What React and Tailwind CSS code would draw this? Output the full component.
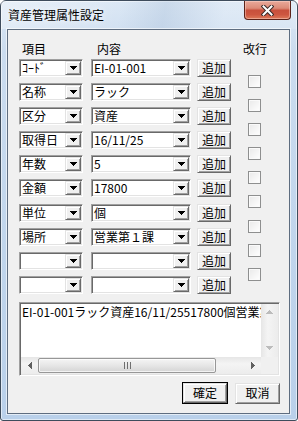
const rows = [
  ['ｺｰﾄﾞ', 'EI-01-001'],
  ['名称', 'ラック'],
  ['区分', '資産'],
  ['取得日', '16/11/25'],
  ['年数', '5'],
  ['金額', '17800'],
  ['単位', '個'],
  ['場所', '営業第１課'],
  ['', ''],
  ['', ''],
];

const sunken =
  'border border-t-[#a0a0a0] border-l-[#a0a0a0] border-r-white border-b-white shadow-[inset_1px_1px_0_#696969,inset_-1px_-1px_0_#e3e3e3]';
const raised =
  'border border-t-[#e3e3e3] border-l-[#e3e3e3] border-r-[#696969] border-b-[#696969] bg-[#f0f0f0] shadow-[inset_1px_1px_0_#fff,inset_-1px_-1px_0_#a0a0a0]';

const DownTri = ({ color = '#000' }) => (
  <svg width="7" height="4" viewBox="0 0 7 4" shapeRendering="crispEdges">
    <path d="M0 0h7v1h-1v1h-1v1h-1v1h-1v-1h-1v-1h-1v-1h-1z" fill={color} />
  </svg>
);

const Combo = ({ width, text }) => (
  <div className={`flex h-[18px] ${width} bg-white p-[1px] ${sunken}`}>
    <span className="flex-1 whitespace-nowrap pl-[1px] text-[12px] leading-[14px]">{text}</span>
    <span className={`flex w-[16px] items-center justify-center ${raised}`}>
      <DownTri />
    </span>
  </div>
);

const Checkbox = () => (
  <div className="h-[13px] w-[13px] border border-[#8e8f8f] bg-[linear-gradient(135deg,#e9e9e9,#ffffff)] shadow-[inset_0_0_0_1px_#fafafa]" />
);

const ArrowSmall = ({ dir, color }) => {
  const paths = {
    up: 'M3 0h1v1h1v1h1v1h1v1h-7v-1h1v-1h1v-1h1z',
    down: 'M0 0h7v1h-1v1h-1v1h-1v1h-1v-1h-1v-1h-1v-1h-1z',
  };
  if (dir === 'left' || dir === 'right') {
    const d =
      dir === 'left'
        ? 'M3 0h1v7h-1v-1h-1v-1h-1v-1h-1v-1h1v-1h1v-1h1z'
        : 'M0 0h1v1h1v1h1v1h1v1h-1v1h-1v1h-1v1h-1z';
    return (
      <svg width="4" height="7" viewBox="0 0 4 7" shapeRendering="crispEdges">
        <path d={d} fill={color} />
      </svg>
    );
  }
  return (
    <svg width="7" height="4" viewBox="0 0 7 4" shapeRendering="crispEdges">
      <path d={paths[dir]} fill={color} />
    </svg>
  );
};

export default function App() {
  return (
    <div className="h-[421px] w-[298px] bg-white font-['Noto_Sans_CJK_JP',sans-serif] text-black">
      <div className="flex h-[421px] w-[298px] flex-col rounded-t-[6px] rounded-b-[3px] border border-[#3e4c5c] bg-[linear-gradient(180deg,#dce8f5_0%,#cbdcef_12%,#c0d5ec_60%,#b9d0ea_100%)] shadow-[inset_0_0_0_1px_rgba(255,255,255,0.55)]">
        {/* title bar */}
        <div className="flex h-[28px] items-start bg-[linear-gradient(100deg,rgba(255,255,255,0.35)_0%,rgba(255,255,255,0)_40%,rgba(150,175,205,0.25)_55%,rgba(255,255,255,0.15)_75%)]">
          <span className="ml-[7px] mt-[7px] text-[12px] leading-[14px] [text-shadow:0_0_6px_#fff]">資産管理属性設定</span>
          <div className="flex-1" />
          <div className="mr-[6px] flex h-[19px] w-[47px] items-center justify-center rounded-b-[4px] border border-t-0 border-[#5b2219] bg-[linear-gradient(180deg,#e9aa9b_0%,#dc8b78_40%,#c8503c_52%,#cd5640_75%,#dd7a5a_100%)] shadow-[inset_0_0_0_1px_rgba(255,220,210,0.45)]">
            <svg width="13" height="11" viewBox="0 0 13 11">
              <path d="M2.5 1.5L10.5 9.5M10.5 1.5L2.5 9.5" stroke="#3b2a28" strokeWidth="4" strokeLinecap="square" />
              <path d="M2.5 1.5L10.5 9.5M10.5 1.5L2.5 9.5" stroke="#fff" strokeWidth="2" strokeLinecap="square" />
            </svg>
          </div>
        </div>

        {/* client area */}
        <div className="mb-[6px] ml-[6px] mr-[7px] flex flex-1 flex-col border border-[#5e6d80] bg-[#f0f0f0] pl-[11px] pt-[12px] shadow-[0_0_0_1px_rgba(255,255,255,0.6)]">
          <div className="flex h-[14px] text-[12px] leading-[14px]">
            <span className="ml-[3px] w-[75px]">項目</span>
            <span className="w-[146px]">内容</span>
            <span>改行</span>
          </div>

          <div className="mt-[3px] flex">
            <div className="flex flex-col gap-y-[6.1px]">
              {rows.map(([k, v], i) => (
                <div key={i} className="flex h-[18px]">
                  <Combo width="w-[64px]" text={k} />
                  <div className="ml-[8px]">
                    <Combo width="w-[100px]" text={v} />
                  </div>
                  <button className={`ml-[6px] flex h-[18px] w-[34px] items-center justify-center text-[12px] leading-[14px] ${raised}`}>
                    追加
                  </button>
                </div>
              ))}
            </div>
            <div className="ml-[17px] flex flex-col gap-y-[11.1px] pt-[16px]">
              {Array.from({ length: 9 }).map((_, i) => (
                <Checkbox key={i} />
              ))}
            </div>
          </div>

          {/* text area */}
          <div className={`mt-[8px] flex h-[74px] w-[261px] flex-col bg-white p-[1px] ${sunken}`}>
            <div className="flex flex-1">
              <div className="flex-1 overflow-hidden whitespace-nowrap pl-[1px] pt-[1px] text-[12px] leading-[14px]">
                EI-01-001ラック資産16/11/25517800個営業第１課
              </div>
              <div className="flex w-[17px] flex-col justify-between bg-[linear-gradient(90deg,#e6e6e6,#f4f4f4_40%,#ececec)]">
                <div className="flex h-[17px] items-center justify-center">
                  <ArrowSmall dir="up" color="#bcbcbc" />
                </div>
                <div className="flex h-[17px] items-center justify-center">
                  <ArrowSmall dir="down" color="#bcbcbc" />
                </div>
              </div>
            </div>
            <div className="flex h-[17px]">
              <div className="flex flex-1 items-stretch bg-[linear-gradient(180deg,#e6e6e6,#f4f4f4_40%,#ececec)]">
                <div className="flex w-[17px] items-center justify-center">
                  <ArrowSmall dir="left" color="#606060" />
                </div>
                <div className="my-[1px] flex w-[178px] items-center justify-center gap-[2px] rounded-[2px] border border-[#979797] bg-[linear-gradient(180deg,#f5f5f5,#e6e6e6_50%,#d4d4d4)] shadow-[inset_0_0_0_1px_rgba(255,255,255,0.7)]">
                  <span className="h-[7px] w-[1px] bg-[#6f6f6f]" />
                  <span className="h-[7px] w-[1px] bg-[#6f6f6f]" />
                  <span className="h-[7px] w-[1px] bg-[#6f6f6f]" />
                </div>
                <div className="flex-1" />
                <div className="flex w-[17px] items-center justify-center">
                  <ArrowSmall dir="right" color="#606060" />
                </div>
              </div>
              <div className="w-[17px] bg-[#f0f0f0]" />
            </div>
          </div>

          {/* buttons */}
          <div className="mt-[6px] flex w-[261px] justify-end gap-[7px]">
            <div className="border border-black">
              <button className={`flex h-[20px] w-[44px] items-center justify-center text-[12px] leading-[14px] ${raised}`}>
                確定
              </button>
            </div>
            <button className={`mt-[1px] flex h-[21px] w-[45px] items-center justify-center text-[12px] leading-[14px] ${raised}`}>
              取消
            </button>
          </div>
        </div>
      </div>
    </div>
  );
}
